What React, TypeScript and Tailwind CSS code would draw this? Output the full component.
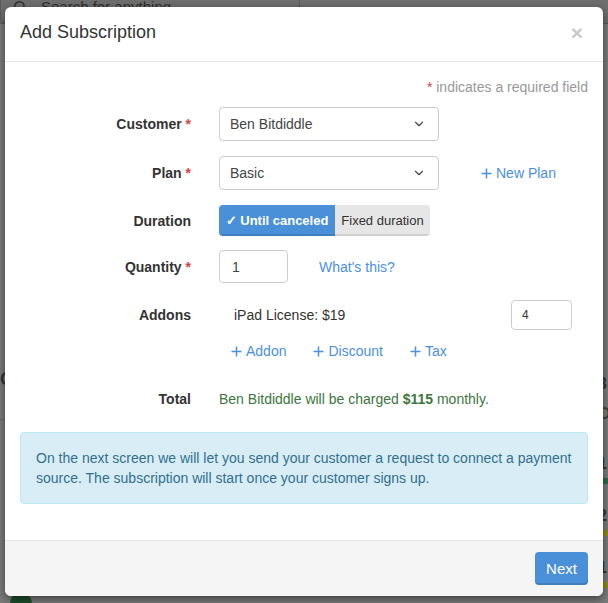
import type { ReactNode } from 'react'
import { ChevronDown, Search } from 'lucide-react'

function Req() {
  return <span className="text-[#d9413f]">*</span>
}

interface RowProps {
  label: string
  required?: boolean
  className?: string
  children: ReactNode
}

function Row({ label, required, className = '', children }: RowProps) {
  return (
    <div className={`grid grid-cols-[171px_1fr] items-center gap-x-[28px] ${className}`}>
      <div className="text-right font-bold text-[#333]">
        {label}
        {required && (
          <>
            {' '}
            <Req />
          </>
        )}
      </div>
      <div className="flex items-center">{children}</div>
    </div>
  )
}

function Select({ value }: { value: string }) {
  return (
    <div className="flex h-[34px] w-[220px] items-center justify-between rounded-[4px] border border-[#cccccc] pl-[10px] pr-[12px] text-[#444]">
      <span>{value}</span>
      <ChevronDown size={14} strokeWidth={2} className="text-[#444]" />
    </div>
  )
}

// thin plus like the glyphicon used in the links
function AddLink({ children, className = '' }: { children: ReactNode; className?: string }) {
  return (
    <a className={`flex items-center text-[#4a90e2] ${className}`}>
      <svg width="11" height="11" viewBox="0 0 11 11" className="mr-[4px]">
        <path d="M5.5 0.5v10M0.5 5.5h10" stroke="currentColor" strokeWidth="1.5" />
      </svg>
      {children}
    </a>
  )
}

function PageBehind() {
  return (
    <div className="flex h-full flex-col">
      <div className="flex h-[24px] items-end border-b border-[#5c5c5c] bg-[#6e6e6e]">
        <div className="flex h-[32px] w-[300px] items-center gap-[14px] rounded-[4px] border border-[#5a5a5a] pl-[12px] text-[#2f2f2f]">
          <Search size={14} strokeWidth={2.5} />
          <span className="text-[15px]">Search for anything</span>
        </div>
      </div>
      <div className="flex flex-1">
        <div className="flex w-[40px] flex-col pt-[345px]">
          <span className="text-[18px] font-bold text-[#333]">C</span>
          <div className="mt-[30px] h-px bg-[#6a6a6a]" />
          <div className="mt-auto ml-[10px] h-[20px] w-[22px] translate-y-[10px] rounded-full bg-[#1f4d2c]" />
        </div>
        <div className="flex-1" />
        <div className="flex w-[10px] flex-col pt-[350px] text-[16px] font-bold text-[#333]">
          <span className="leading-[20px]">3</span>
          <span className="mt-[10px] leading-[20px] text-[#444]">O</span>
          <span className="mt-[30px] leading-[20px]">1</span>
          <div className="mt-[4px] h-[6px] bg-[#2e6a48]" />
          <span className="mt-[22px] leading-[20px]">2</span>
          <div className="mt-[4px] h-[6px] bg-[#8b8b1e]" />
          <span className="mt-[22px] leading-[20px]">1</span>
          <div className="mt-[4px] h-[6px] bg-[#8b8b1e]" />
        </div>
      </div>
    </div>
  )
}

export default function App() {
  return (
    <div className="relative h-[603px] w-[608px] overflow-hidden bg-[#7b7b7b] font-['Liberation_Sans',Arial,sans-serif] text-[14px] leading-[20px]">
      <PageBehind />

      <div className="absolute left-[5px] top-[7px] flex w-[598px] flex-col rounded-[6px] bg-white shadow-[0_3px_9px_rgba(0,0,0,0.5)]">
        <div className="flex h-[55px] items-center justify-between border-b border-[#e5e5e5] pb-[4px] pl-[15px] pr-[20px]">
          <h4 className="text-[18px] text-[#333]">Add Subscription</h4>
          <span className="text-[21px] font-bold leading-none text-[#c9c9c9]">×</span>
        </div>

        <div className="flex flex-col px-[15px] pb-[15px] pt-[15px]">
          <p className="text-right text-[#999]">
            <Req /> indicates a required field
          </p>

          <Row label="Customer" required className="mt-[10px]">
            <Select value="Ben Bitdiddle" />
          </Row>

          <Row label="Plan" required className="mt-[15px]">
            <Select value="Basic" />
            <AddLink className="ml-[42px]">New Plan</AddLink>
          </Row>

          <Row label="Duration" className="mt-[15px]">
            <div className="flex h-[31px] overflow-hidden rounded-[4px] text-[13px]">
              <span className="flex w-[116px] items-center justify-center bg-[#4a90d9] font-bold text-white shadow-[inset_0_-2px_0_rgba(0,0,0,0.12)]">
                ✓ Until canceled
              </span>
              <span className="flex w-[95px] items-center justify-center bg-[#e6e6e6] text-[#333] shadow-[inset_0_-2px_0_rgba(0,0,0,0.1)]">
                Fixed duration
              </span>
            </div>
          </Row>

          <Row label="Quantity" required className="mt-[14px]">
            <div className="flex h-[33px] w-[69px] items-center rounded-[4px] border border-[#cccccc] pl-[12px] text-[#444]">
              1
            </div>
            <a className="ml-[31px] text-[#4a90e2]">What's this?</a>
          </Row>

          <Row label="Addons" className="mt-[17px]">
            <span className="pl-[15px] text-[#333]">iPad License: $19</span>
            <div className="ml-auto mr-[16px] flex h-[30px] w-[61px] items-center rounded-[4px] border border-[#cccccc] pl-[10px] text-[12px] text-[#333]">
              4
            </div>
          </Row>

          <Row label="" className="mt-[11px]">
            <div className="flex gap-[27px] pl-[12px]">
              <AddLink>Addon</AddLink>
              <AddLink>Discount</AddLink>
              <AddLink>Tax</AddLink>
            </div>
          </Row>

          <Row label="Total" className="mt-[28px]">
            <span className="text-[#3c763d]">
              Ben Bitdiddle will be charged <b>$115</b> monthly.
            </span>
          </Row>

          <div className="mb-[21px] mt-[23px] rounded-[4px] border border-[#bce8f1] bg-[#d9edf7] p-[15px] text-[#31708f]">
            On the next screen we will let you send your customer a request to connect a payment source. The
            subscription will start once your customer signs up.
          </div>
        </div>

        <div className="flex justify-end rounded-b-[6px] border-t border-[#e5e5e5] bg-[#f5f5f5] px-[15px] py-[11px]">
          <button
            type="button"
            className="h-[33px] w-[53px] rounded-[4px] bg-[#4a90d9] text-[15px] text-white shadow-[inset_0_-2px_0_rgba(0,0,0,0.12)]"
          >
            Next
          </button>
        </div>
      </div>
    </div>
  )
}
